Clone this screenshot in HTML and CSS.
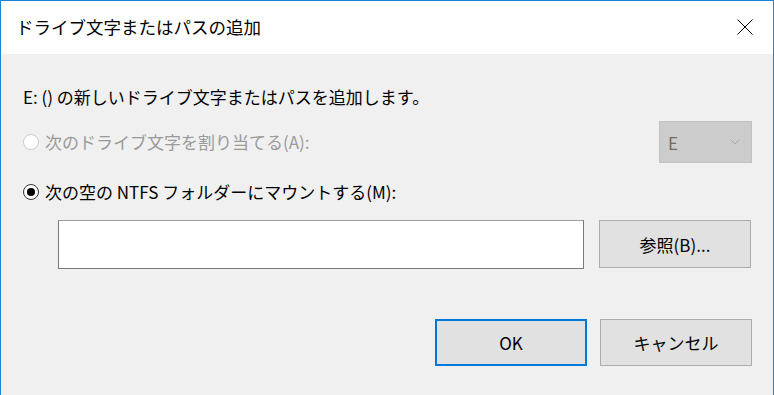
FILE: index.html
```html
<!DOCTYPE html>
<html lang="ja">
<head>
    <meta charset="UTF-8">
    <title>ドライブ文字またはパスの追加</title>
    <link rel="stylesheet" href="styles.css">
</head>
<body>
    <div class="dialog">
        <!-- Title bar -->
        <div class="titlebar">
            <span class="title">ドライブ文字またはパスの追加</span>
            <span class="close">
                <svg width="16" height="16" viewBox="0 0 16 16">
                    <path d="M0.5 0.5 L15.5 15.5 M15.5 0.5 L0.5 15.5" stroke="#000" stroke-width="1" fill="none"/>
                </svg>
            </span>
        </div>

        <!-- Body -->
        <div class="content">
            <div class="intro">E: () の新しいドライブ文字またはパスを追加します。</div>

            <div class="row letter-row">
                <label class="radio disabled">
                    <span class="dot"></span>
                    次のドライブ文字を割り当てる(A):
                </label>
                <div class="combo">
                    <span>E</span>
                    <svg width="10" height="6" viewBox="0 0 10 6">
                        <path d="M0.5 0.5 L5 5 L9.5 0.5" stroke="#a8a8a8" stroke-width="1" fill="none"/>
                    </svg>
                </div>
            </div>

            <div class="row mount-row">
                <label class="radio checked">
                    <span class="dot"></span>
                    次の空の NTFS フォルダーにマウントする(M):
                </label>
            </div>

            <div class="path-row">
                <div class="path-input"></div>
                <button class="btn">参照(B)...</button>
            </div>

            <div class="actions">
                <button class="btn default">OK</button>
                <button class="btn">キャンセル</button>
            </div>
        </div>
    </div>
</body>
</html>
```

FILE: styles.css
```css
* {
    margin: 0;
    padding: 0;
    box-sizing: border-box;
}
html, body {
    width: 100%;
    height: 100%;
    overflow: hidden;
    font-family: "Noto Sans CJK JP", "Noto Sans", sans-serif;
    color: #000;
}
.dialog {
    width: 774px;
    height: 395px;
    background-color: #f0f0f0;
    border: 1px solid #1883d7;
    border-bottom: none;
    display: flex;
    flex-direction: column;
}
/* Title bar */
.titlebar {
    height: 53px;
    background-color: #fff;
    display: flex;
    align-items: center;
    justify-content: space-between;
    padding: 0 20px 0 15px;
}
.title {
    font-size: 17.5px;
    line-height: 26px;
    padding-bottom: 1px;
}
.close {
    display: flex;
    padding-bottom: 1px;
}
/* Body */
.content {
    padding: 0 21px 0 22px;
    font-size: 17px;
}
.intro {
    margin-top: 30px;
    height: 26px;
    line-height: 26px;
}
.row {
    display: flex;
    align-items: center;
    justify-content: space-between;
}
.letter-row {
    margin-top: 11px;
    height: 42px;
}
.mount-row {
    margin-top: 16px;
    height: 26px;
}
.radio {
    display: flex;
    align-items: center;
    gap: 6px;
    line-height: 26px;
}
.radio .dot {
    width: 16px;
    height: 16px;
    border-radius: 50%;
    background-color: #fff;
    border: 1px solid #333;
    display: flex;
    align-items: center;
    justify-content: center;
}
.radio.disabled {
    color: #9a9a9a;
}
.radio.disabled .dot {
    border-color: #cccccc;
}
.radio.checked .dot::after {
    content: "";
    width: 8px;
    height: 8px;
    border-radius: 50%;
    background-color: #000;
}
.combo {
    width: 93px;
    height: 42px;
    background-color: #cccccc;
    border: 1px solid #c2c2c2;
    display: flex;
    align-items: center;
    justify-content: space-between;
    padding: 0 11px 0 8px;
    color: #6d6d6d;
    font-size: 17px;
}
.path-row {
    margin-top: 15px;
    padding-left: 35px;
    display: flex;
    gap: 15px;
}
.path-input {
    width: 526px;
    height: 49px;
    background-color: #fff;
    border: 1px solid #7a7a7a;
    border-top-color: #a0a0a0;
}
.btn {
    width: 152px;
    height: 48px;
    background-color: #e1e1e1;
    border: 1px solid #adadad;
    font-family: inherit;
    font-size: 17px;
    color: #000;
}
.actions {
    margin-top: 50px;
    display: flex;
    justify-content: flex-end;
    gap: 13px;
}
.actions .btn {
    height: 47px;
}
.btn.default {
    border: 2px solid #0078d7;
}
```
